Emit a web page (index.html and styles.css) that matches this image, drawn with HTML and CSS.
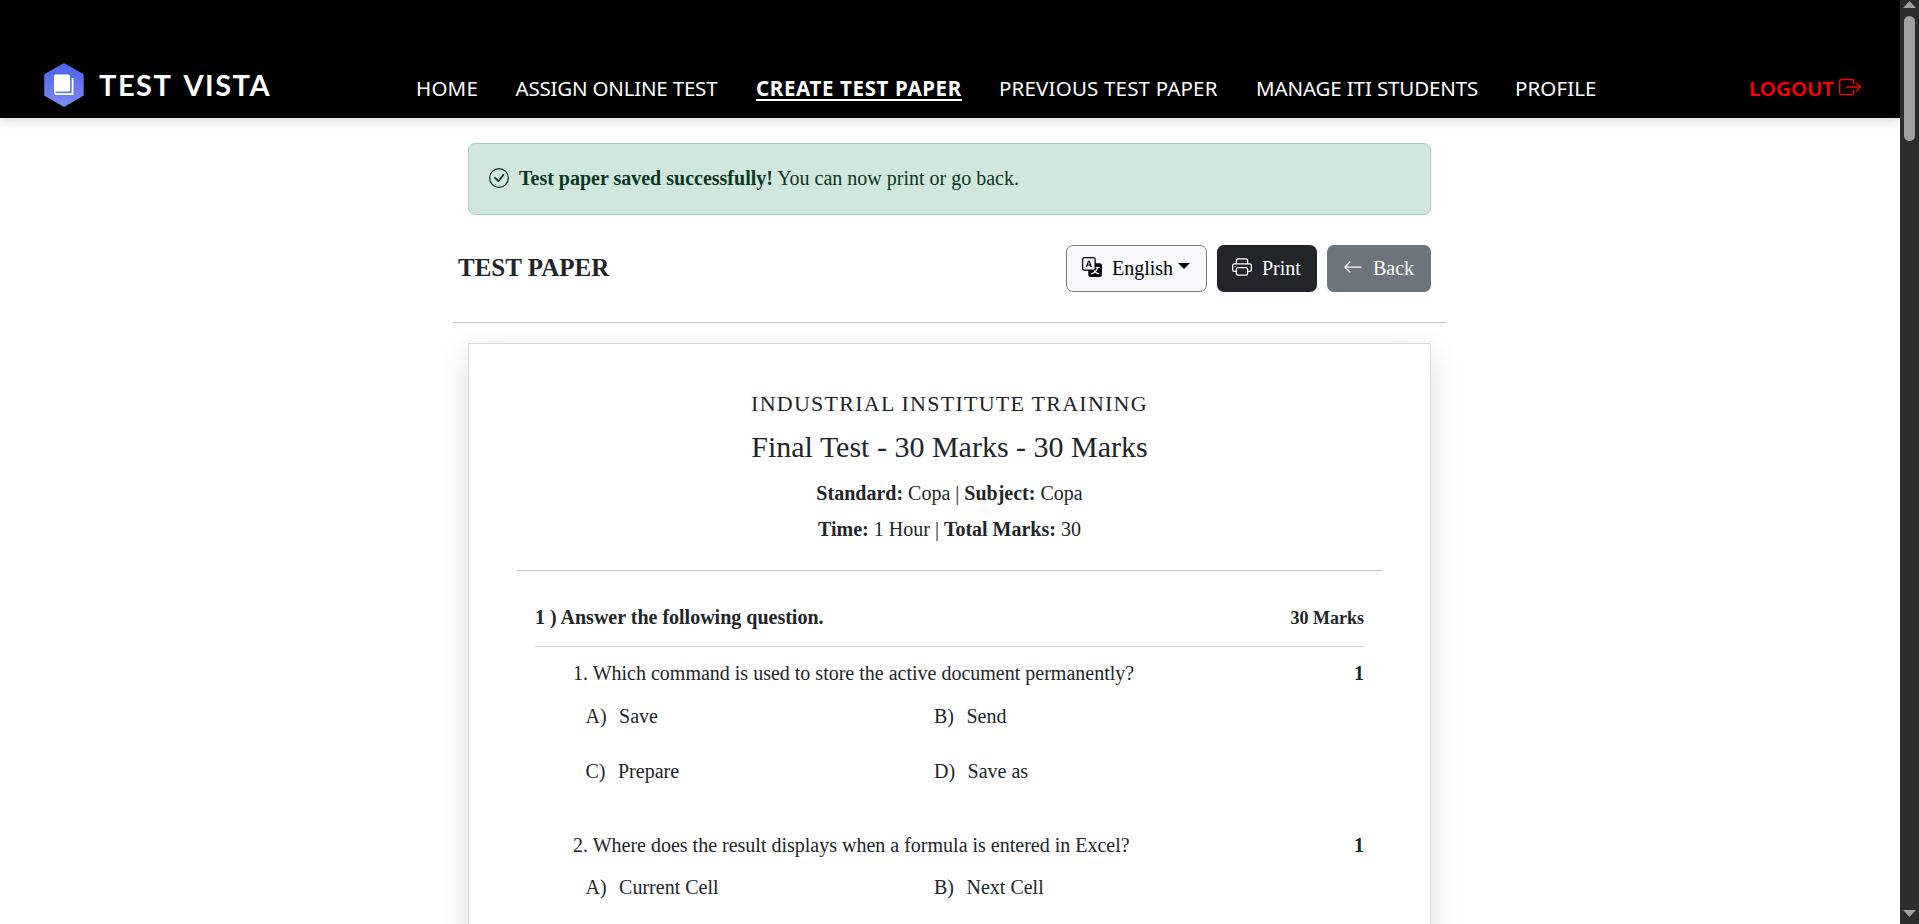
FILE: index.html
```html
<!DOCTYPE html>
<html lang="en">
<head>
<meta charset="utf-8">
<title>Test Vista - Test Paper</title>
<link rel="stylesheet" href="styles.css">
</head>
<body>
<div class="viewport">
  <div class="page">
    <header class="header">
      <a class="brand">
        <svg class="brand-mark" width="42" height="46" viewBox="0 0 42 46">
          <defs><linearGradient id="hex" x1="0" y1="0" x2="0" y2="1"><stop offset="0" stop-color="#4a62ea"/><stop offset="1" stop-color="#7b8af2"/></linearGradient></defs>
          <path d="M21 1 40.700 12.200V33.500L21 45 1.200 33.500V12.200Z" fill="url(#hex)"/>
          <rect x="11" y="12.500" width="16" height="17" rx="1.500" fill="#fff"/>
          <path d="M29.600 16V32.200H13.500C12.200 32.200 11.900 31.500 11.900 30V27" fill="none" stroke="#fff" stroke-width="1.800" stroke-linejoin="round"/>
        </svg>
        <span class="brand-name">TEST VISTA</span>
      </a>
      <nav class="nav">
        <a class="w-home">HOME</a>
        <a class="w-assign">ASSIGN ONLINE TEST</a>
        <a class="w-create active">CREATE TEST PAPER</a>
        <a class="w-previous">PREVIOUS TEST PAPER</a>
        <a class="w-manage">MANAGE ITI STUDENTS</a>
        <a class="w-profile">PROFILE</a>
      </nav>
      <a class="logout"><span>LOGOUT</span>
        <svg width="22" height="22" viewBox="0 0 16 16" fill="currentColor"><path fill-rule="evenodd" d="M10 12.500a.5.5 0 0 1-.5.5h-8a.5.5 0 0 1-.5-.5v-9a.5.5 0 0 1 .5-.5h8a.5.5 0 0 1 .5.5v2a.5.5 0 0 0 1 0v-2A1.500 1.500 0 0 0 9.500 2h-8A1.500 1.500 0 0 0 0 3.500v9A1.500 1.500 0 0 0 1.500 14h8a1.500 1.500 0 0 0 1.500-1.500v-2a.5.5 0 0 0-1 0z"/><path fill-rule="evenodd" d="M15.854 8.354a.5.5 0 0 0 0-.708l-3-3a.5.5 0 0 0-.708.708L14.293 7.500H5.500a.5.5 0 0 0 0 1h8.793l-2.147 2.146a.5.5 0 0 0 .708.708z"/></svg>
      </a>
    </header>

    <main class="content">
      <div class="alert">
        <svg width="20" height="20" viewBox="0 0 16 16" fill="currentColor"><path d="M8 15A7 7 0 1 1 8 1a7 7 0 0 1 0 14m0 1A8 8 0 1 0 8 0a8 8 0 0 0 0 16"/><path d="m10.970 4.970-.02.022-3.473 4.425-2.093-2.094a.75.75 0 0 0-1.060 1.060L6.970 11.030a.75.75 0 0 0 1.079-.02l3.992-4.990a.75.75 0 0 0-1.071-1.050"/></svg>
        <p><strong>Test paper saved successfully!</strong> You can now print or go back.</p>
      </div>

      <div class="toolbar">
        <h1>TEST PAPER</h1>
        <div class="actions">
          <button class="btn btn-light">
            <svg width="20" height="20" viewBox="0 0 16 16" fill="currentColor"><path d="M4.545 6.714 4.110 8H3l1.862-5h1.284L8 8H6.833l-.435-1.286zm1.634-.736L5.500 3.956h-.049l-.679 2.022z"/><path d="M0 2a2 2 0 0 1 2-2h7a2 2 0 0 1 2 2v3h3a2 2 0 0 1 2 2v7a2 2 0 0 1-2 2H7a2 2 0 0 1-2-2v-3H2a2 2 0 0 1-2-2zm2-1a1 1 0 0 0-1 1v7a1 1 0 0 0 1 1h7a1 1 0 0 0 1-1V2a1 1 0 0 0-1-1zm7.138 9.995q.289.451.63.846c-.748.575-1.673 1.001-2.768 1.292.178.217.451.635.555.867 1.125-.359 2.080-.844 2.886-1.494.777.665 1.739 1.165 2.930 1.472.133-.254.414-.673.629-.890-1.125-.253-2.057-.694-2.820-1.284.681-.747 1.222-1.651 1.621-2.757H14V8h-3v1.047h.765c-.318.844-.740 1.546-1.272 2.130a6 6 0 0 1-.415-.492 2 2 0 0 1-.940.310"/></svg>
            <span>English</span><i class="caret"></i>
          </button>
          <button class="btn btn-dark">
            <svg width="20" height="20" viewBox="0 0 16 16" fill="currentColor"><path d="M2.500 8a.5.5 0 1 0 0-1 .5.5 0 0 0 0 1"/><path d="M5 1a2 2 0 0 0-2 2v2H2a2 2 0 0 0-2 2v3a2 2 0 0 0 2 2h1v1a2 2 0 0 0 2 2h6a2 2 0 0 0 2-2v-1h1a2 2 0 0 0 2-2V7a2 2 0 0 0-2-2h-1V3a2 2 0 0 0-2-2zM4 3a1 1 0 0 1 1-1h6a1 1 0 0 1 1 1v2H4zm1 5a2 2 0 0 0-2 2v1H2a1 1 0 0 1-1-1V7a1 1 0 0 1 1-1h12a1 1 0 0 1 1 1v3a1 1 0 0 1-1 1h-1v-1a2 2 0 0 0-2-2zm7 2v3a1 1 0 0 1-1 1H5a1 1 0 0 1-1-1v-3a1 1 0 0 1 1-1h6a1 1 0 0 1 1 1"/></svg>
            <span>Print</span>
          </button>
          <button class="btn btn-gray">
            <svg width="20" height="20" viewBox="0 0 16 16" fill="currentColor"><path fill-rule="evenodd" d="M15 8a.5.5 0 0 0-.5-.5H2.707l3.147-3.146a.5.5 0 1 0-.708-.708l-4 4a.5.5 0 0 0 0 .708l4 4a.5.5 0 0 0 .708-.708L2.707 8.500H14.500A.5.5 0 0 0 15 8"/></svg>
            <span>Back</span>
          </button>
        </div>
      </div>

      <article class="paper">
        <div class="paper-head">
          <div class="institute">INDUSTRIAL INSTITUTE TRAINING</div>
          <h2>Final Test - 30 Marks - 30 Marks</h2>
          <p><b>Standard:</b> Copa | <b>Subject:</b> Copa</p>
          <p><b>Time:</b> 1 Hour | <b>Total Marks:</b> 30</p>
        </div>
        <section class="section">
          <div class="section-head"><span>1 ) Answer the following question.</span><span class="total">30 Marks</span></div>
          <div class="question">
            <div class="ask"><span>1. Which command is used to store the active document permanently?</span><b>1</b></div>
            <div class="options">
              <div><span>A)</span><span>Save</span></div><div><span>B)</span><span>Send</span></div>
              <div><span>C)</span><span>Prepare</span></div><div><span>D)</span><span>Save as</span></div>
            </div>
          </div>
          <div class="question">
            <div class="ask"><span>2. Where does the result displays when a formula is entered in Excel?</span><b>1</b></div>
            <div class="options compact">
              <div><span>A)</span><span>Current Cell</span></div><div><span>B)</span><span>Next Cell</span></div>
            </div>
          </div>
        </section>
      </article>
    </main>
  </div>
  <div class="scrollbar">
    <svg width="13" height="7" viewBox="0 0 13 7"><path d="M6.500 0 13 7H0Z" fill="#9f9f9f"/></svg>
    <div class="thumb"></div>
    <svg class="down" width="13" height="7" viewBox="0 0 13 7"><path d="M0 0H13L6.500 7Z" fill="#9f9f9f"/></svg>
  </div>
</div>
</body>
</html>
```
FILE: styles.css
```css
* { box-sizing: border-box; }
body { margin: 0; background: #fff; color: #212529; font: 20px/30px "Liberation Serif", serif; overflow: hidden; }
h1, h2, p { margin: 0; font-weight: 400; }
svg { display: block; flex: none; }

.viewport { display: flex; height: 924px; overflow: hidden; }
.page { width: 1900px; height: 924px; overflow: hidden; }

.header { display: flex; height: 118px; padding: 62px 39px 0 43px; background: #000; box-shadow: 0 3px 10px rgba(0, 0, 0, .15); position: relative; color: #fff; font-family: "Noto Sans", sans-serif; }
.brand { display: flex; width: 373px; gap: 14px; }
.brand-name { font: 700 29px/46px Lato, sans-serif; letter-spacing: 1.500px; word-spacing: 4.500px; white-space: nowrap; }
.nav { display: flex; gap: 37px; font-size: 20.500px; line-height: 27px; padding-top: 13px; white-space: nowrap; }
.nav a { height: 27px; }
.w-home { width: 62.500px; letter-spacing: .2px; }
.w-assign { width: 203.500px; letter-spacing: -.2px; }
.w-create { width: 206px; }
.w-previous { width: 220px; letter-spacing: .18px; }
.w-manage { width: 222px; letter-spacing: -.12px; }
.w-profile { width: 83px; letter-spacing: .1px; }
.nav .active { font-weight: 700; text-decoration: underline; text-decoration-thickness: 2px; text-underline-offset: 3px; letter-spacing: .65px; }
.logout { display: flex; gap: 5px; margin-left: auto; padding-top: 13px; color: #f00; font-size: 20.500px; line-height: 27px; font-weight: 600; }
.logout svg { margin-top: 1px; }

.content { width: 993px; margin: 0 auto 0 453px; padding-top: 25px; }
.alert { display: flex; align-items: center; gap: 10px; height: 72px; margin: 0 15px; padding: 0 20px 2px; background: #d1e7dd; border: 1px solid #a3cfbb; border-radius: 7px; color: #0a3622; }
.toolbar { display: flex; justify-content: space-between; height: 108px; padding: 30px 15px 0 5px; border-bottom: 1px solid #c4c5c6; }
.toolbar h1 { font-size: 25px; font-weight: 700; line-height: 46px; }
.actions { display: flex; gap: 10px; }
.btn { display: flex; align-items: center; height: 47px; border: 0; border-radius: 7px; padding: 0 15px 1px; gap: 10px; font: 20px/30px "Liberation Serif", serif; color: #fff; }
.btn svg { margin-bottom: 3px; }
.btn-light { width: 141px; background: #f8f9fa; border: 1px solid #7c7d7e; color: #000; }
.btn-dark { width: 100px; background: #212529; }
.btn-gray { width: 104px; padding-left: 16px; background: #6c757d; }
.caret { border: 6px solid transparent; border-top-color: #000; border-bottom: 0; margin: 0 0 4px -5px; }

.paper { height: 700px; margin: 20px 15px 0; padding: 47px 48px; border: 1px solid #d9dbdd; background: #fff; box-shadow: 0 10px 30px rgba(0, 0, 0, .13); }
.paper-head { height: 180px; text-align: center; border-bottom: 1px solid #c4c5c6; }
.institute { font-size: 22px; line-height: 26px; letter-spacing: 1.250px; }
.paper-head h2 { font-size: 30px; line-height: 36px; margin: 12px 0 10px; }
.paper-head p { line-height: 36px; }

.section { padding: 0 18px; }
.section-head { display: flex; justify-content: space-between; height: 76px; padding-top: 31px; border-bottom: 1px solid #d5d6d7; font-weight: 700; }
.section-head .total { font-size: 18px; padding-top: 1px; }
.question { height: 172px; padding: 11px 0 0 38px; }
.ask { display: flex; justify-content: space-between; }
.options { display: grid; grid-template-columns: 348.500px 348px; grid-auto-rows: 55px; padding: 13px 0 0 12.500px; }
.options.compact { padding-top: 12px; }
.options div { display: flex; gap: 12.500px; }

.scrollbar { width: 19px; height: 924px; background: #2c2c2c; display: flex; flex-direction: column; align-items: center; padding: 1px 0 7px; }
.thumb { width: 11px; height: 125px; margin-top: 8px; border-radius: 6px; background: #9f9f9f; }
.scrollbar .down { margin-top: auto; }
```
